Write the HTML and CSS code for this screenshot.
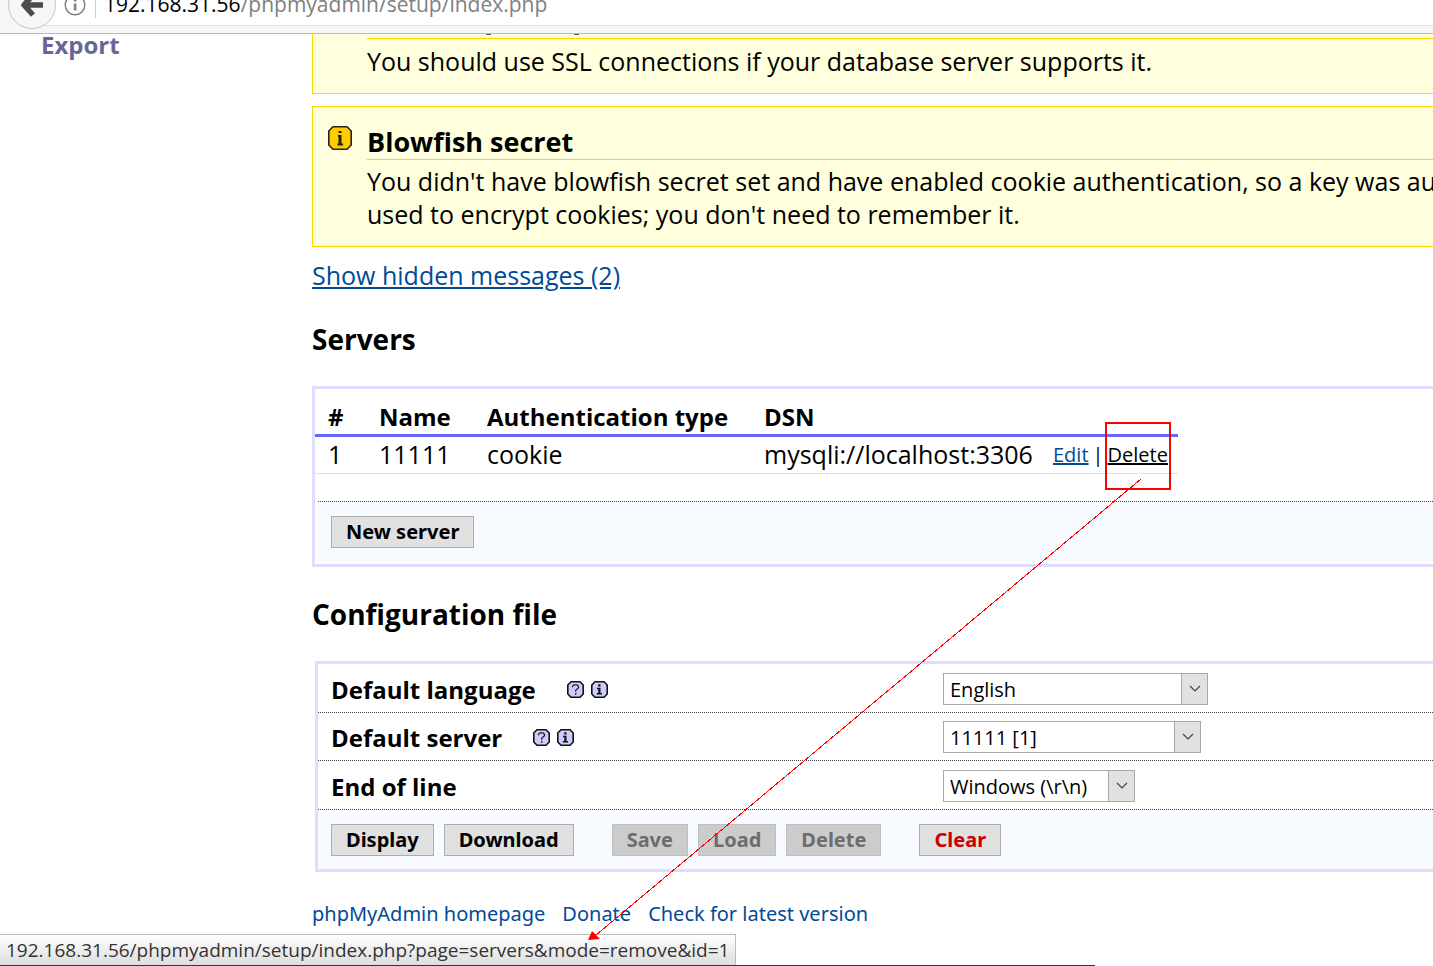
FILE: index.html
```html
<!DOCTYPE html>
<html lang="en">
<head>
<meta charset="utf-8">
<title>phpMyAdmin setup</title>
<link rel="stylesheet" href="styles.css">
</head>
<body>
<svg class="sprites" width="0" height="0" aria-hidden="true">
  <symbol id="help" viewBox="0 0 17 17">
    <path d="M4 .8h9l3.200 3.200v9L13 16.200H4L.8 13V4z" fill="#ccccff" stroke="#111" stroke-width="1.600" stroke-linejoin="round"/>
    <path d="M5.500 6.200V5.200l1.500-1.400h3l1.500 1.400v1.600L8.700 9.200v1.600M8.700 12v1.700" fill="none" stroke="#222" stroke-width="1.300"/>
  </symbol>
  <symbol id="info" viewBox="0 0 17 17">
    <path d="M4 .8h9l3.200 3.200v9L13 16.200H4L.8 13V4z" fill="#ccccff" stroke="#111" stroke-width="1.600" stroke-linejoin="round"/>
    <path d="M7.200 3.200h2.300v2.200H7.200zM6 6.800h3.500v5.200H11v1.600H5.800V12h1.500V8.300H6z" fill="#111"/>
  </symbol>
  <symbol id="chevron" viewBox="0 0 12 8">
    <path d="M1 1l5 5 5-5" fill="none" stroke="#444" stroke-width="1.200"/>
  </symbol>
</svg>

<header class="toolbar">
  <button class="back" aria-label="Back">
    <svg width="24" height="24" viewBox="0 0 24 24"><path d="M13 2L4 12l9 10M5 12h18" fill="none" stroke="#4c4c4c" stroke-width="5.500" stroke-linejoin="round"/></svg>
  </button>
  <div class="address">
    <svg width="22" height="22" viewBox="0 0 22 22"><circle cx="11" cy="11" r="9.800" fill="none" stroke="#808080" stroke-width="1.500"/><path d="M9.800 5h2.600v2.600H9.800zM9.800 9.500h2.600v7H9.800z" fill="#808080"/></svg>
    <span class="rule"></span>
    <span class="url"><b>192.168.31.56</b>/phpmyadmin/setup/index.php</span>
  </div>
</header>

<div class="page">
  <nav class="side"><a href="#export">Export</a></nav>
  <main class="main">
    <section class="notice notice-cut">
      <svg class="tails" width="100" height="2" viewBox="0 0 100 2" aria-hidden="true"><path d="M0 0h5M88 0h5" stroke="#555" stroke-width="2"/></svg>
      <div class="notice-body"><p>You should use SSL connections if your database server supports it.</p></div>
    </section>
    <section class="notice">
      <svg class="notice-icon" width="24" height="24" viewBox="0 0 24 24"><path d="M5 .8h14L23.200 5v14L19 23.200H5L.8 19V5z" fill="#ffcc00" stroke="#222" stroke-width="1.600"/><path d="M10.500 5h3v2h-3zM10 9h3.500v8.500H15v2H9.500v-2h1V11H10z" fill="#221"/></svg>
      <div class="notice-body">
        <h4>Blowfish secret</h4>
        <p>You didn't have blowfish secret set and have enabled cookie authentication, so a key was aut<br>used to encrypt cookies; you don't need to remember it.</p>
      </div>
    </section>
    <a class="hidden-link" href="#messages">Show hidden messages (2)</a>

    <h2>Servers</h2>
    <section class="panel">
      <table class="servers">
        <thead><tr><th class="c-id">#</th><th class="c-name">Name</th><th class="c-auth">Authentication type</th><th class="c-dsn">DSN</th><th class="c-act"></th></tr></thead>
        <tbody><tr><td>1</td><td>11111</td><td>cookie</td><td>mysqli://localhost:3306</td><td><div class="actions"><a href="#edit">Edit</a><span>|</span><a class="hover" href="#delete">Delete</a></div></td></tr></tbody>
      </table>
      <div class="buttons buttons-inset"><button>New server</button></div>
    </section>

    <h2>Configuration file</h2>
    <form class="panel panel-config">
      <div class="row">
        <div class="name"><label for="lang">Default language</label><svg class="hint"><use href="#help"/></svg><svg class="hint"><use href="#info"/></svg></div>
        <div class="pick pick-wide"><select id="lang"><option>English</option></select><span class="drop"><svg width="12" height="8"><use href="#chevron"/></svg></span></div>
      </div>
      <div class="row">
        <div class="name"><label for="server">Default server</label><svg class="hint"><use href="#help"/></svg><svg class="hint"><use href="#info"/></svg></div>
        <div class="pick pick-mid"><select id="server"><option>11111 [1]</option></select><span class="drop"><svg width="12" height="8"><use href="#chevron"/></svg></span></div>
      </div>
      <div class="row row-last">
        <div class="name"><label for="eol">End of line</label></div>
        <div class="pick pick-small"><select id="eol"><option>Windows (\r\n)</option></select><span class="drop"><svg width="12" height="8"><use href="#chevron"/></svg></span></div>
      </div>
      <div class="buttons">
        <div class="group"><button type="button">Display</button><button type="button">Download</button></div>
        <div class="group"><button type="button" disabled>Save</button><button type="button" disabled>Load</button><button type="button" disabled>Delete</button></div>
        <div class="group"><button type="button" class="danger">Clear</button></div>
      </div>
    </form>

    <footer class="links"><a href="#home">phpMyAdmin homepage</a><a href="#donate">Donate</a><a href="#version">Check for latest version</a></footer>
  </main>
</div>

<div class="status">192.168.31.56/phpmyadmin/setup/index.php?page=servers&amp;mode=remove&amp;id=1</div>
<div class="edge"></div>
<svg class="marks" width="1433" height="966" viewBox="0 0 1433 966" aria-hidden="true">
  <rect x="1106" y="423" width="64" height="66" fill="none" stroke="#f00" stroke-width="2"/>
  <path d="M1141 479L596 935" stroke="#f00" fill="none" shape-rendering="crispEdges"/>
  <path d="M588 940l4-9 8 8z" fill="#f00"/>
</svg>
</body>
</html>
```
FILE: styles.css
```css
* { box-sizing: border-box; }
body {
  margin: 0;
  position: relative;
  min-height: 100vh;
  overflow: hidden;
  background: #fff;
  color: #000;
  font: 25px/33px "Open Sans", "Noto Sans", sans-serif;
}
h2, h4, p { margin: 0; }
a { color: #004a98; }
.sprites { position: absolute; }

.toolbar {
  display: flex;
  align-items: flex-end;
  height: 34px;
  overflow: hidden;
  background: #f6f6f6;
  border-bottom: 1px solid #bbb;
}
.back {
  z-index: 1;
  flex: none;
  display: grid;
  place-items: center;
  width: 48px;
  height: 48px;
  margin: 0 0 4px 8px;
  padding: 0;
  border: 1px solid #c4c4c4;
  border-radius: 50%;
  background: #f6f6f6;
}
.address {
  flex: 1;
  display: flex;
  align-items: center;
  height: 42px;
  margin: 0 0 7px -20px;
  padding-left: 28px;
  background: #fff;
  border-bottom: 1px solid #e2e2e2;
}
.rule { width: 1px; height: 26px; margin: 0 8px 0 9px; background: #ccc; }
.url { font-size: 21px; color: #808080; white-space: nowrap; }
.url b { font-weight: 400; color: #000; }

.page { display: grid; grid-template-columns: 312px minmax(0, 1fr); }
.side { padding-left: 41px; line-height: 20px; }
.side a { color: #666699; font-weight: 700; font-size: 24px; text-decoration: none; }

.notice {
  display: flex;
  padding: 18px 0 15px 15px;
  border: 1px solid #ffd700;
  border-right: 0;
  background: #ffffdd;
}
.notice + .notice { margin-top: 12px; }
.notice-icon { flex: none; margin: 1px 15px 0 0; }
.notice-body { flex: 1; min-width: 0; white-space: nowrap; }
.notice h4 { border-bottom: 1px solid #ffd700; font-size: 27px; line-height: 34px; margin-bottom: 5px; }
.notice-cut { position: relative; padding: 4px 0 15px 54px; border-top: 0; }
.notice-cut .notice-body { padding-top: 6px; border-top: 1px solid #ffd700; }
.tails { position: absolute; top: 0; left: 173px; }
.hidden-link { display: block; width: max-content; margin-top: 12px; }
h2 { font-size: 28px; line-height: 36px; margin: 29px 0; }

.panel { border: 3px solid #ddddff; border-right: 0; }
.panel-config { margin-left: 3px; }
.servers { width: 863px; margin: 11px 0 27px; table-layout: fixed; border-collapse: collapse; }
.servers th, .servers td { padding: 0 0 0 13px; text-align: left; white-space: nowrap; }
.servers th { height: 35px; border-bottom: 3px solid #6666ff; font-size: 24px; }
.servers td { height: 38px; border-bottom: 1px solid #ddddff; }
.c-id { width: 51px; }
.c-name { width: 108px; }
.c-auth { width: 277px; }
.c-dsn { width: 289px; }
.actions { display: flex; gap: 4px; font-size: 20px; }
.hover { color: #000; }

.buttons {
  display: flex;
  gap: 38px;
  padding: 14px 13px 13px;
  border-top: 1px dotted #444;
  background: #f7faff;
}
.buttons-inset { margin: 0 0 3px 3px; }
.group { display: flex; gap: 10px; }
.buttons button {
  height: 32px;
  padding: 0 14px;
  border: 1px solid #adadad;
  background: #e1e1e1;
  color: #000;
  font: 700 20px/28px "Noto Sans", sans-serif;
}
.buttons button:disabled { background: #ccc; border-color: #bfbfbf; color: #6d6d6d; }
.buttons .danger { color: #c00; }

.row { display: flex; align-items: center; min-height: 48px; padding-top: 2px; border-bottom: 1px dotted #444; }
.row:first-child { min-height: 49px; padding-top: 3px; }
.row-last { min-height: 49px; padding-top: 3px; }
.row + .buttons { border-top: 0; }
.name { flex: none; display: flex; align-items: center; width: 625px; padding-left: 13px; }
.name label { font-size: 24px; font-weight: 700; margin-right: 24px; }
.hint { width: 17px; height: 17px; margin-left: 7px; }
.pick { display: grid; height: 32px; }
.pick > * { grid-area: 1 / 1; }
.pick-wide { width: 265px; }
.pick-mid { width: 258px; }
.pick-small { width: 192px; }
.pick select {
  appearance: none;
  width: 100%;
  padding: 2px 6px 0;
  border: 1px solid #a9a9a9;
  border-radius: 0;
  background: #fff;
  color: #000;
  font: 20px/28px "Open Sans", sans-serif;
}
.drop {
  z-index: 1;
  justify-self: end;
  display: grid;
  place-items: center;
  width: 27px;
  border: 1px solid #a9a9a9;
  background: #e1e1e1;
  pointer-events: none;
}

.links { display: flex; gap: 17px; margin-top: 25px; font-family: "Noto Sans", sans-serif; font-size: 20px; white-space: nowrap; }
.links a { text-decoration: none; }

.status {
  position: absolute;
  left: 0;
  bottom: 1px;
  height: 31px;
  padding: 0 6px;
  border: 1px solid #bbb;
  border-width: 1px 1px 0 0;
  background: linear-gradient(#fff, #ddd);
  color: #333;
  font-size: 19px;
  line-height: 30px;
  white-space: nowrap;
}
.edge { position: absolute; left: 0; bottom: 0; width: 76.4%; height: 1px; background: #0a4a3c; }
.marks { position: absolute; left: 0; top: 0; pointer-events: none; }
```
